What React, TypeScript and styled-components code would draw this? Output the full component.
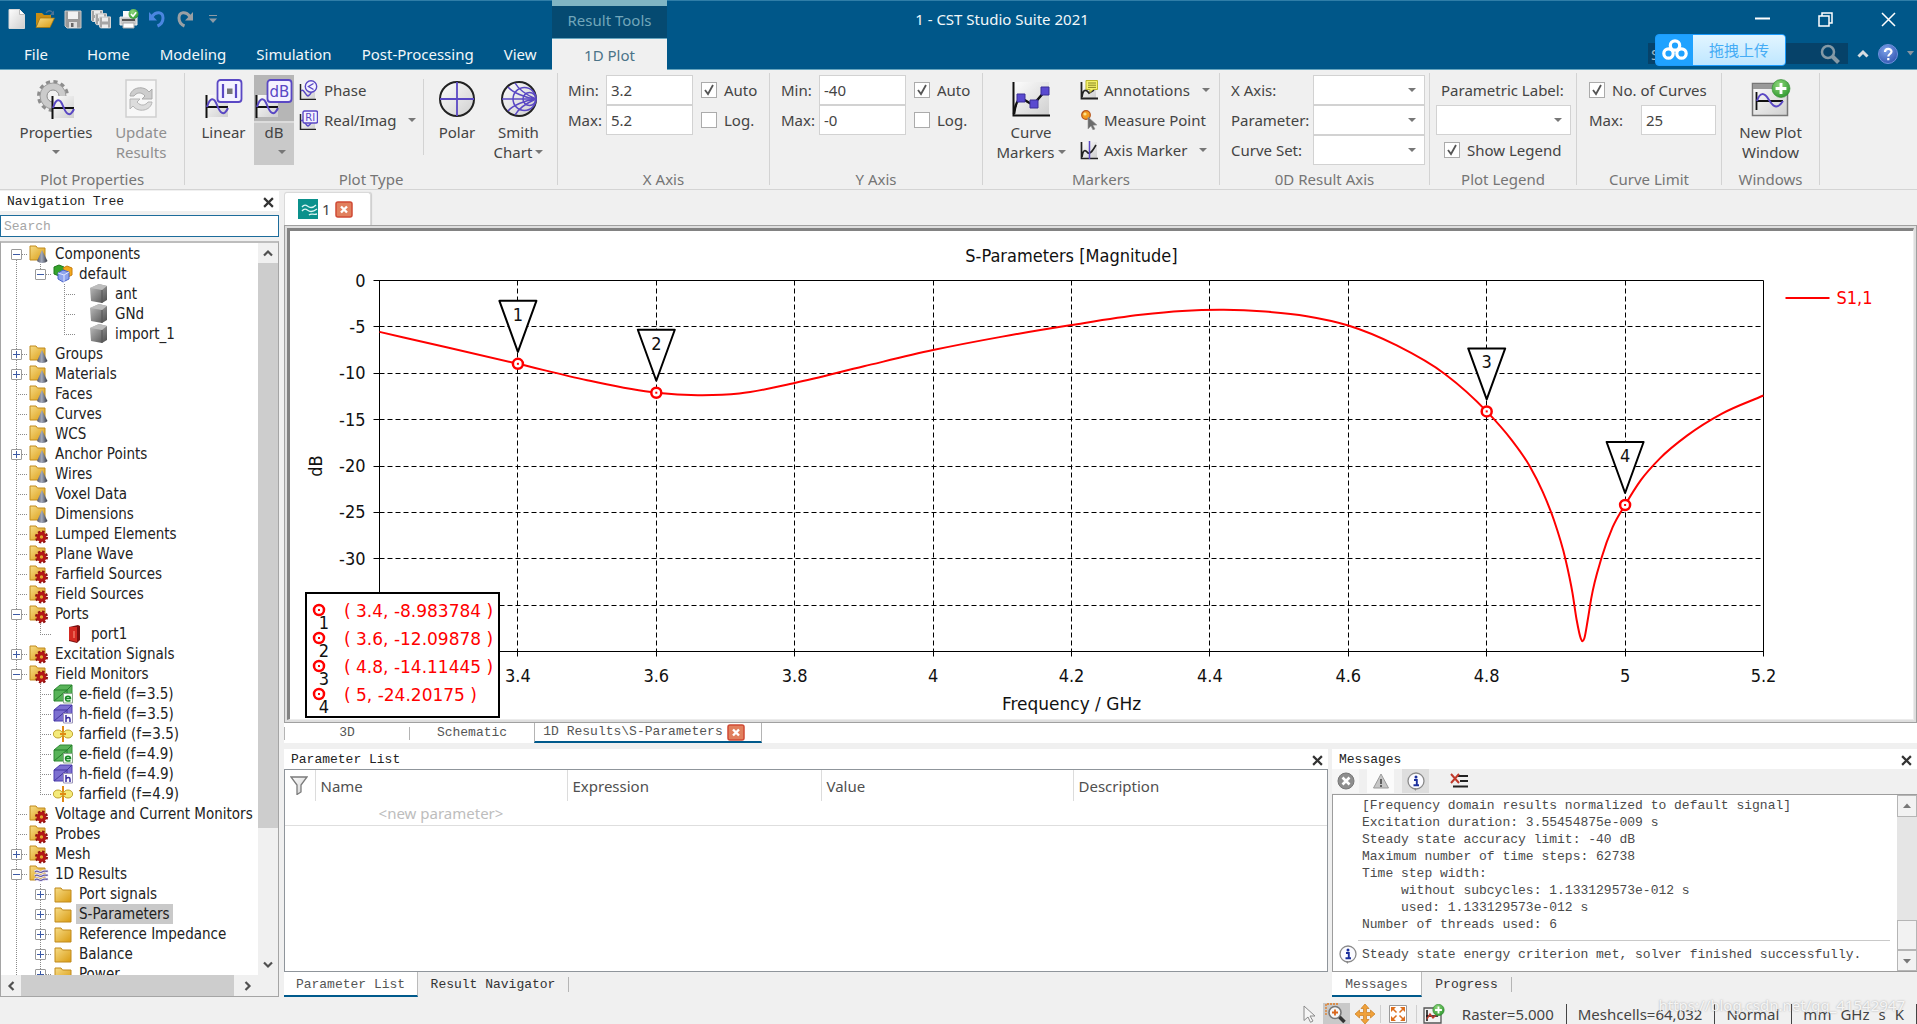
import React, { ReactNode, useLayoutEffect, useRef, useState } from "react";
import styled, { createGlobalStyle, css } from "styled-components";

/* ---------- theme values ---------- */

const uiFont = `"Noto Sans", "Noto Sans CJK SC", sans-serif`;
const monoFont = `"Liberation Mono", monospace`;
const tahoma = `"DejaVu Sans Condensed", "DejaVu Sans", sans-serif`;
const verdana = `"DejaVu Sans", sans-serif`;

const Global = createGlobalStyle`
  *, *::before, *::after { box-sizing: border-box; }
  body { margin: 0; background: #f0f0f0; font: 15px/20px ${uiFont}; color: #444; }
  button, input, select { font: inherit; color: inherit; margin: 0; padding: 0; border-radius: 0; }
  button { background: none; border: 0; text-align: inherit; }
  svg { display: block; flex: none; }
`;

const Page = styled.div`
  display: flex;
  flex-direction: column;
  height: 100vh;
  min-height: 720px;
  overflow: hidden;
`;

/* ---------- header ---------- */

const Header = styled.header`
  display: grid;
  grid-template-columns: 552px 115px 1fr 580px;
  grid-template-rows: 38px 31px;
  flex: none;
  background: #005789;
  color: #f2f7fa;
  border-bottom: 1px solid #66a5be;
  box-shadow: inset 0 1px 0 #2f7ea8;
`;

const QuickBar = styled.div`
  display: flex;
  align-items: center;
  gap: 8px;
  padding-left: 7px;
`;

const QuickButton = styled.button`
  display: grid;
  place-items: center;
  width: 20px;
  height: 22px;
`;

const ContextTitle = styled.div`
  display: flex;
  align-items: center;
  justify-content: center;
  padding-bottom: 5px;
  border-top: 6px solid #80b5c4;
  background: #054a71;
  color: #72a6ba;
`;

const WindowTitle = styled.div`
  display: flex;
  align-items: center;
  justify-content: center;
`;

const WindowButtons = styled.div`
  display: flex;
  justify-content: flex-end;
  align-items: center;
  gap: 30px;
  padding-right: 12px;
`;

const WindowButton = styled.button`
  display: grid;
  place-items: center;
  width: 33px;
  height: 30px;
`;

const Menu = styled.nav`
  display: flex;
  align-items: center;
`;

const MenuItem = styled.button<{ $wide?: boolean }>`
  padding: 0 ${(p) => (p.$wide ? 24 : 15)}px;
  height: 30px;
`;

const ActiveTab = styled.button`
  display: flex;
  justify-content: center;
  align-items: center;
  background: #f0f0f0;
  color: #4b7388;
  border-top: 1px solid #66a5be;
  margin-bottom: -1px;
`;

const HeaderTools = styled.div`
  grid-column: 4;
  display: flex;
  align-items: center;
  justify-content: flex-end;
  padding-right: 3px;
  gap: 8px;
`;

const SearchBox = styled.label`
  position: relative;
  display: flex;
  align-items: center;
  width: 200px;
  height: 21px;
  padding: 0 8px 0 3px;
  background: #064269;
  margin-right: 1px;
`;

const SearchInput = styled.input`
  flex: 1;
  min-width: 0;
  border: 0;
  background: none;
  &::placeholder { color: #9fb9c8; opacity: 1; }
`;

const UploadBadge = styled.button`
  position: absolute;
  left: 7px;
  top: -9px;
  display: flex;
  width: 131px;
  height: 32px;
  border: 1px solid #1b9bfc;
  border-radius: 4px;
  overflow: hidden;
  background: #1fa2ff;
`;

const UploadMark = styled.span`
  display: grid;
  place-items: center;
  width: 37px;
`;

const UploadText = styled.span`
  flex: 1;
  display: grid;
  place-items: center;
  background: linear-gradient(#e2f5ff, #bfe7ff);
  color: #45acf5;
`;

/* ---------- ribbon ---------- */

const Ribbon = styled.section`
  display: flex;
  flex: none;
  height: 120px;
  border-bottom: 1px solid #d4d4d4;
`;

const GroupBox = styled.div<{ $w: number }>`
  display: flex;
  flex-direction: column;
  width: ${(p) => p.$w}px;
  flex: none;
`;

const GroupBody = styled.div<{ $pad?: number; $end?: number }>`
  display: flex;
  flex: 1;
  padding: 5px ${(p) => p.$end ?? 0}px 0 ${(p) => p.$pad ?? 0}px;
`;

const GroupName = styled.div`
  height: 20px;
  text-align: center;
  color: #757575;
`;

const Rule = styled.div<{ $inner?: boolean }>`
  width: 1px;
  flex: none;
  background: #d3d3d3;
  margin: ${(p) => (p.$inner ? "4px 0 14px" : "3px 0 4px")};
`;

const BigButton = styled.button<{ $w: number; $on?: boolean }>`
  display: flex;
  flex-direction: column;
  align-items: center;
  flex: none;
  width: ${(p) => p.$w}px;
  height: 90px;
  text-align: center;
  ${(p) => p.$on && css`background: linear-gradient(#b6b6b6 46px, #dcdcdc 46px, #dcdcdc 48px, #c9c9c9 48px);`}
  &:disabled { color: #8f8f8f; }
`;

const BigIcon = styled.span`
  display: grid;
  place-items: center;
  height: 47px;
`;

const BigLine = styled.span<{ $end?: boolean }>`
  display: flex;
  align-items: center;
  justify-content: ${(p) => (p.$end ? "flex-end" : "center")};
  align-self: stretch;
  gap: 3px;
  height: 20px;
  padding-right: ${(p) => (p.$end ? 8 : 0)}px;
`;

const Caret = styled.i`
  flex: none;
  border: 4px solid transparent;
  border-top-color: #777;
  border-bottom: 0;
  width: 0;
  height: 0;
`;

const Stack = styled.div<{ $pad?: number }>`
  display: flex;
  flex-direction: column;
  padding-left: ${(p) => p.$pad ?? 0}px;
`;

const SmallButton = styled.button`
  display: flex;
  align-items: center;
  gap: 6px;
  height: 30px;
  white-space: nowrap;
  ${Caret} { margin-left: 6px; }
`;

const FieldGrid = styled.div<{ $cols: string }>`
  display: grid;
  grid-template-columns: ${(p) => p.$cols};
  grid-auto-rows: 30px;
  align-items: center;
`;

const FieldRow = styled.div<{ $pad?: number }>`
  display: flex;
  align-items: center;
  height: 30px;
  padding-left: ${(p) => p.$pad ?? 0}px;
`;

const FieldLabel = styled.label<{ $w?: number }>`
  white-space: nowrap;
  width: ${(p) => (p.$w ? `${p.$w}px` : "auto")};
`;

const TextInput = styled.input<{ $w: number }>`
  width: ${(p) => p.$w}px;
  height: 30px;
  padding: 0 4px;
  border: 1px solid #d2d2d2;
  background: #fff;
`;

const SelectBox = styled.span<{ $w: number }>`
  display: grid;
  align-items: center;
  width: ${(p) => p.$w}px;
  height: 30px;
  ${Caret} { grid-area: 1 / 1; justify-self: end; margin-right: 9px; pointer-events: none; }
`;

const Select = styled.select`
  grid-area: 1 / 1;
  appearance: none;
  width: 100%;
  height: 30px;
  border: 1px solid #d2d2d2;
  background: #fff;
`;

const CheckLabel = styled.label<{ $pad?: number }>`
  display: flex;
  align-items: center;
  gap: 7px;
  padding-left: ${(p) => p.$pad ?? 0}px;
  white-space: nowrap;
`;

const TickBox = styled.span`
  display: grid;
  place-items: center;
  width: 16px;
  height: 16px;
  > * { grid-area: 1 / 1; }
  svg { pointer-events: none; }
`;

const TickInput = styled.input`
  appearance: none;
  width: 16px;
  height: 16px;
  border: 1px solid #ababab;
  background: #fff;
`;

/* ---------- workspace ---------- */

const Workspace = styled.main`
  display: flex;
  flex: 1;
  min-height: 0;
  gap: 5px;
`;

const Sidebar = styled.aside`
  display: flex;
  flex-direction: column;
  width: 279px;
  flex: none;
  padding-top: 1px;
`;

const PanelTitle = styled.div`
  display: flex;
  align-items: center;
  justify-content: space-between;
  flex: none;
  height: 20px;
  padding: 2px 5px 0 7px;
  background: #fff;
  font: 13px/18px ${monoFont};
  color: #222;
`;

const IconButton = styled.button`
  display: grid;
  place-items: center;
  flex: none;
`;

const TreeSearch = styled.input`
  height: 22px;
  margin: 4px 0;
  padding: 0 3px;
  border: 1px solid #1d6c9b;
  background: #fff;
  font: 13px/20px ${monoFont};
  &::placeholder { color: #a6a6a6; opacity: 1; }
`;

const TreeBox = styled.div`
  display: grid;
  grid-template-columns: 1fr 20px;
  grid-template-rows: 1fr 21px;
  flex: 1;
  min-height: 0;
  border: 1px solid #a5a5a5;
  border-top-width: 2px;
  border-top-color: #bdbdbd;
  background: #f0f0f0;
`;

const TreeList = styled.ul`
  margin: 0;
  padding: 1px 0 0 3px;
  list-style: none;
  overflow: hidden;
  background: #fff;
  font: 15px/20px ${tahoma};
  color: #222;
`;

const TreeRow = styled.li`
  display: flex;
  height: 20px;
  white-space: nowrap;
`;

const Guide = styled.span`
  display: grid;
  place-items: center;
  width: 24px;
  flex: none;
  > * { grid-area: 1 / 1; }
`;

const Expander = styled.button`
  display: grid;
  place-items: center;
  width: 11px;
  height: 11px;
  border: 1px solid #9a9a9a;
  border-radius: 1px;
  background: #fff;
`;

const TreeIcon = styled.span<{ $far?: boolean }>`
  display: grid;
  place-items: center;
  flex: none;
  width: 20px;
  height: 20px;
  margin: 0 3px 0 ${(p) => (p.$far ? 13 : 1)}px;
`;

const TreeLabel = styled.span<{ $on?: boolean }>`
  padding: 0 3px;
  background: ${(p) => (p.$on ? "#c9c9c9" : "none")};
`;

const ScrollTrack = styled.div<{ $row?: boolean }>`
  display: flex;
  flex-direction: ${(p) => (p.$row ? "row" : "column")};
  align-items: stretch;
  min-height: 0;
`;

const ScrollEnd = styled.button`
  display: grid;
  place-items: center;
  flex: 0 0 20px;
`;

const ScrollThumb = styled.div<{ $grow: number }>`
  flex: ${(p) => p.$grow} 0 0;
  background: #cdcdcd;
`;

const ScrollRest = styled.div<{ $grow: number }>`
  flex: ${(p) => p.$grow} 0 0;
`;

const Content = styled.div`
  display: flex;
  flex-direction: column;
  flex: 1;
  min-width: 0;
`;

const DocTabs = styled.div`
  display: flex;
  align-items: flex-end;
  flex: none;
  height: 35px;
`;

const DocTab = styled.div`
  display: flex;
  align-items: center;
  gap: 4px;
  width: 87px;
  height: 33px;
  padding-left: 13px;
  background: #fff;
  border: 1px solid #dadada;
  border-bottom: 0;
  border-radius: 3px 3px 0 0;
  box-shadow: 1px 0 1px #ccc;
`;

const PlotFrame = styled.div`
  display: flex;
  flex: 1;
  min-height: 0;
  border: 1px solid #a0a0a0;
  padding: 2px;
  background: #dedede;
`;

const PlotArea = styled.div`
  flex: 1;
  min-width: 0;
  overflow: hidden;
  border-style: solid;
  border-width: 3px 1px 1px 3px;
  border-color: #828282 #ececec #ececec #828282;
  background: #fff;
`;

const ViewTabs = styled.div`
  display: flex;
  align-items: center;
  flex: none;
  height: 20px;
  margin-bottom: 6px;
  background: #fff;
  font: 13px/18px ${monoFont};
`;

const ViewTab = styled.button<{ $w: number; $on?: boolean }>`
  display: flex;
  align-items: center;
  justify-content: center;
  gap: 4px;
  width: ${(p) => p.$w}px;
  height: ${(p) => (p.$on ? 20 : 13)}px;
  color: #555;
  border-style: solid;
  border-color: #b4b4b4;
  border-width: ${(p) => (p.$on ? "0 1px 2px" : "0 0 0 1px")};
  ${(p) => p.$on && css`border-bottom-color: #005a8c; padding-right: 8px;`}
`;

const Lower = styled.div`
  display: flex;
  flex: none;
  height: 248px;
  gap: 4px;
`;

const Panel = styled.section<{ $grow: number }>`
  display: flex;
  flex-direction: column;
  flex: ${(p) => p.$grow} 1 0;
  min-width: 0;
`;

const PanelBox = styled.div`
  flex: 1;
  min-height: 0;
  border: 1px solid #8f959b;
  background: #fff;
`;

const ParamTable = styled.table`
  width: 100%;
  table-layout: fixed;
  border-collapse: collapse;
  th { height: 31px; padding: 0 5px; font-weight: 400; text-align: left; border-right: 1px solid #dcdcdc; color: #505050; }
  th:last-child { border-right: 0; }
  td { height: 24px; padding: 0; text-align: center; color: #bdbdbd; }
  tbody tr { border-bottom: 1px solid #dedede; }
`;

const FootTabs = styled.div`
  display: flex;
  flex: none;
  height: 25px;
  font: 13px/20px ${monoFont};
`;

const FootTab = styled.button<{ $w: number; $on?: boolean }>`
  width: ${(p) => p.$w}px;
  text-align: center;
  ${(p) =>
    p.$on
      ? css`background: #fff; border-bottom: 2px solid #005a8c; border-right: 1px solid #bbb; padding-top: 2px; color: #555;`
      : css`height: 15px; margin-top: 5px; line-height: 15px; border-right: 1px solid #b5b5b5; color: #333;`}
`;

const MsgTools = styled.div`
  display: flex;
  flex: none;
  height: 25px;
`;

const MsgTool = styled.button<{ $bg: string; $gap?: number }>`
  display: grid;
  place-items: center;
  width: 27px;
  height: 24px;
  margin-left: ${(p) => p.$gap ?? 4}px;
  background: ${(p) => p.$bg};
`;

const MsgBox = styled.div`
  display: flex;
  flex: 1;
  min-height: 0;
  border: 1px solid #9d9d9d;
  border-right: 0;
  background: #fff;
`;

const MsgList = styled.div`
  flex: 1;
  min-width: 0;
  overflow: hidden;
  font: 13px/17px ${monoFont};
  color: #4a4a4a;
`;

const MsgText = styled.pre`
  margin: 0 7px 0 25px;
  padding: 2px 0 0 4px;
  font: inherit;
  height: 146px;
  border-bottom: 1px solid #c9c9c9;
`;

const MsgLast = styled.div`
  display: flex;
  align-items: center;
  gap: 5px;
  height: 26px;
  padding-left: 6px;
  white-space: nowrap;
`;

const MsgScroll = styled.div`
  display: flex;
  flex-direction: column;
  width: 20px;
  background: #e5e5e5;
`;

const MsgScrollKey = styled.button<{ $h: number }>`
  display: grid;
  place-items: center;
  height: ${(p) => p.$h}px;
  border: 1px solid #b5b5b5;
  background: #f2f2f2;
`;

const Spacer = styled.div`
  flex: 1;
`;

/* ---------- status bar ---------- */

const Status = styled.footer`
  position: relative;
  display: flex;
  align-items: center;
  justify-content: flex-end;
  flex: none;
  height: 27px;
  padding-top: 6px;
`;

const StatusTool = styled.button<{ $on?: boolean; $w: number }>`
  display: grid;
  place-items: center;
  width: ${(p) => p.$w}px;
  height: 22px;
  background: ${(p) => (p.$on ? "#c9c9c9" : "none")};
`;

const StatusRule = styled.i`
  width: 1px;
  height: 18px;
  background: #cfcfcf;
`;

const StatusCell = styled.span`
  display: flex;
  gap: 9px;
  padding: 0 12px 0 11px;
  line-height: 20px;
  border-right: 1px solid #444;
`;

const Watermark = styled.span`
  position: absolute;
  right: 12px;
  top: -2px;
  color: rgba(255, 255, 255, 0.85);
  text-shadow: 0 0 2px rgba(110, 110, 110, 0.6);
  pointer-events: none;
`;

/* ---------- icons ---------- */

const Defs = styled.svg`
  position: absolute;
`;

const Gradients = () => (
  <Defs width="0" height="0" aria-hidden="true">
    <defs>
      <linearGradient id="paper" x1="0" y1="0" x2="1" y2="1">
        <stop offset="0" stopColor="#fdfdfd" />
        <stop offset="1" stopColor="#cfcfcf" />
      </linearGradient>
      <linearGradient id="gold" x1="0" y1="0" x2="1" y2="1">
        <stop offset="0" stopColor="#f7dc86" />
        <stop offset="1" stopColor="#d99b12" />
      </linearGradient>
      <linearGradient id="steel" x1="0" y1="0" x2="1" y2="0">
        <stop offset="0" stopColor="#55596a" />
        <stop offset=".45" stopColor="#a3aabd" />
        <stop offset="1" stopColor="#33363f" />
      </linearGradient>
      <linearGradient id="cube" x1="0" y1="0" x2="1" y2="1">
        <stop offset="0" stopColor="#c2c2c2" />
        <stop offset="1" stopColor="#4c4c4c" />
      </linearGradient>
      <radialGradient id="green" cx=".4" cy=".3" r=".8">
        <stop offset="0" stopColor="#8ed67a" />
        <stop offset="1" stopColor="#27932a" />
      </radialGradient>
      <radialGradient id="blue" cx=".4" cy=".3" r=".8">
        <stop offset="0" stopColor="#7fa3ea" />
        <stop offset="1" stopColor="#2c50ad" />
      </radialGradient>
    </defs>
  </Defs>
);

const Icon = ({ w, h, vb, children }: { w: number; h: number; vb?: string; children: ReactNode }) => (
  <svg width={w} height={h} viewBox={vb ?? `0 0 ${w} ${h}`} fill="none" aria-hidden="true">
    {children}
  </svg>
);

const violet = "#5a48c4";

const NewFile = () => (
  <Icon w={18} h={20}>
    <path d="M1 .5h10.500l5 5V19.500H1z" fill="url(#paper)" stroke="#d9d9d9" />
    <path d="M11.500.5v5h5" fill="#fff" stroke="#bbb" />
  </Icon>
);
const OpenFile = () => (
  <Icon w={20} h={20}>
    <path d="M1 4h6l2 2h7v4H5L1 17z" fill="#c98d13" />
    <path d="M5 9h14.500L15 18.500H1z" fill="url(#gold)" stroke="#a87407" strokeWidth=".7" />
    <path d="M11 4c2-3 5-3 7 0" stroke="#4b7396" strokeWidth="1.300" />
    <path d="M19 1.500V6h-4z" fill="#4b7396" />
  </Icon>
);
const SaveFile = () => (
  <Icon w={18} h={19}>
    <path d="M1 1h16v17H3l-2-2z" fill="#9a9a9a" stroke="#c9c9c9" />
    <path d="M4 1.500h10v7.500H4z" fill="#f2f2f2" />
    <path d="M5 12h8v6H5z" fill="#dedede" />
    <path d="M7 13h2.500v4H7z" fill="#666" />
  </Icon>
);
const SaveAll = () => (
  <Icon w={20} h={19}>
    {[0, 4, 8].map((d) => (
      <g key={d}>
        <path d={`M${d + 0.5} ${d * 0.8 + 0.5}h11v11h-10l-1-1z`} fill="#a5a5a5" stroke="#d5d5d5" />
        <path d={`M${d + 3} ${d * 0.8 + 1}h6v4h-6zM${d + 3} ${d * 0.8 + 8}h6v3.500h-6z`} fill="#ececec" />
      </g>
    ))}
  </Icon>
);
const PrintIcon = () => (
  <Icon w={20} h={20}>
    <path d="M4 2h10v6H4z" fill="#fafafa" />
    <path d="M1 8h17v8H1z" fill="#c9c9c9" stroke="#efefef" />
    <path d="M3 10h13v2H3z" fill="#555" />
    <path d="M4 14h11v5H4z" fill="#fff" stroke="#aaa" />
    <circle cx="14.500" cy="5" r="5" fill="url(#green)" />
    <path d="M12 5l2 2.200 3.200-4" stroke="#fff" strokeWidth="1.600" />
  </Icon>
);
const Undo = ({ color, flip }: { color: string; flip?: boolean }) => (
  <Icon w={18} h={18}>
    <g transform={flip ? "translate(18 0) scale(-1 1)" : undefined}>
      <path d="M4 6.500C8 1 15 1.500 15 8c0 4-2 6.500-5.500 8" stroke={color} strokeWidth="3" />
      <path d="M1 2v8.500h8z" fill={color} />
    </g>
  </Icon>
);
const QuickMore = () => (
  <Icon w={8} h={10}>
    <path d="M0 1.500h8" stroke="#8d9ba6" />
    <path d="M0 4.500h8L4 9z" fill="#8d9ba6" />
  </Icon>
);

const WaveChart = ({ x = 0, y = 0 }: { x?: number; y?: number }) => (
  <g transform={`translate(${x} ${y})`}>
    <path d="M1 0h22v22H1z" fill="url(#paper)" />
    <path d="M1.500 0v23" stroke="#111" strokeWidth="2" />
    <path d="M1 12h22" stroke="#111" strokeWidth="2" />
    <path d="M2 12C5 2 9 2 12 10s7 12 11 3" stroke={violet} strokeWidth="2" />
  </g>
);

const PropertiesIcon = () => (
  <Icon w={40} h={40}>
    <circle cx="17" cy="17" r="14" stroke="#8d8d8d" strokeWidth="4" strokeDasharray="4 3.330" />
    <circle cx="17" cy="17" r="9.500" stroke="#cbcbcb" strokeWidth="7" />
    <circle cx="17" cy="17" r="13" stroke="#9c9c9c" />
    <circle cx="17" cy="17" r="6" stroke="#8d8d8d" />
    <WaveChart x={15} y={17} />
  </Icon>
);
const UpdateIcon = () => (
  <Icon w={34} h={40}>
    <path d="M2 1h30v37H2z" fill="#f7f7f7" stroke="#cfcfcf" strokeWidth="1.500" />
    <path d="M6 17c1-9 14-11 19-4l3-3v10H18l3-3c-4-5-9-3-11 0z" fill="#cdcdcd" stroke="#ababab" />
    <path d="M28 23c-1 9-14 11-19 4l-3 3V20h10l-3 3c4 5 9 3 11 0z" fill="#dcdcdc" stroke="#b5b5b5" />
  </Icon>
);
const Badge = ({ children }: { children: ReactNode }) => (
  <g>
    <rect x="12.500" y="1" width="24" height="22" rx="3" fill="#f4f2ff" stroke={violet} strokeWidth="1.800" />
    {children}
  </g>
);
const LinearIcon = () => (
  <Icon w={38} h={40}>
    <WaveChart x={0} y={16} />
    <Badge>
      <path d="M18 5v14M31 5v14" stroke={violet} strokeWidth="2.200" />
      <path d="M22 9.500h5.500v5.500H22z" fill="#777" />
    </Badge>
  </Icon>
);
const BadgeText = styled.text`
  font-family: ${verdana};
  fill: ${violet};
`;
const DbIcon = () => (
  <Icon w={38} h={40}>
    <WaveChart x={0} y={16} />
    <Badge>
      <BadgeText x="24.500" y="17.500" fontSize="15" textAnchor="middle">dB</BadgeText>
    </Badge>
  </Icon>
);
const MiniChart = () => (
  <>
    <path d="M1 4h15v15H1z" fill="url(#paper)" />
    <path d="M1.500 4v15.500H17" stroke="#222" strokeWidth="1.500" />
    <path d="M2 11c3-3 4 4 7 5 3-1 4-6 6-8" stroke={violet} strokeWidth="1.500" />
  </>
);
const PhaseIcon = () => (
  <Icon w={19} h={20}>
    <MiniChart />
    <circle cx="12" cy="6.500" r="5.700" fill="#f4f2ff" stroke={violet} strokeWidth="1.400" />
    <path d="M14.500 3.500L9.500 6.500l5 3" stroke={violet} strokeWidth="1.400" />
  </Icon>
);
const RealIcon = () => (
  <Icon w={19} h={20}>
    <MiniChart />
    <rect x="4" y="1" width="14.500" height="12" rx="1.500" fill="#f4f2ff" stroke={violet} strokeWidth="1.400" />
    <BadgeText x="11.300" y="10.500" fontSize="10" textAnchor="middle">RI</BadgeText>
  </Icon>
);
const PolarIcon = () => (
  <Icon w={38} h={38}>
    <circle cx="19" cy="19" r="17" fill="url(#paper)" stroke="#222" strokeWidth="2" />
    <path d="M19 2v34M2 19h34" stroke={violet} strokeWidth="1.800" />
  </Icon>
);
const SmithIcon = () => (
  <Icon w={38} h={38}>
    <circle cx="19" cy="19" r="17" fill="url(#paper)" stroke="#222" strokeWidth="2" />
    <g stroke={violet} strokeWidth="1.500">
      <path d="M2 19h34" />
      <circle cx="24.500" cy="19" r="11.500" />
      <circle cx="29.500" cy="19" r="6.500" />
      <path d="M36 19C25 18 12 12 8 7M36 19C25 20 12 26 8 31M36 19C29 16 19 10 15 3M36 19c-7 3-17 9-21 16" />
    </g>
  </Icon>
);
const CurveIcon = () => (
  <Icon w={38} h={38}>
    <path d="M1 2h36v33H1z" fill="url(#paper)" />
    <path d="M1.500 2v33.500H38" stroke="#111" strokeWidth="2" />
    <path d="M2 34c1-8 3-14 7-16l12 7L33 11" stroke="#111" strokeWidth="2.500" />
    <path d="M5 14h8v8H5zM18 20h8v8h-8zM29 7h8v8h-8z" fill="#5a4ad0" stroke="#3b2f98" />
  </Icon>
);
const NoteIcon = () => (
  <Icon w={18} h={20}>
    <path d="M1 2h15v17H1z" fill="url(#paper)" />
    <path d="M1.500 2v16.500H18M2 17c1-8 4-8 7-4l5-3" stroke="#222" strokeWidth="1.800" />
    <path d="M6 .5h11.500v9H13l-3 3v-3H6z" fill="#f5f06a" stroke="#b9b52a" />
    <path d="M8 3h8M8 5.200h8M8 7.400h8" stroke="#7d7a1d" strokeWidth=".9" />
  </Icon>
);
const MeasureIcon = () => (
  <Icon w={18} h={20}>
    <circle cx="6" cy="5" r="4.300" fill="#f39a1d" stroke="#b5541b" strokeWidth="1.200" />
    <circle cx="5" cy="4" r="1.600" fill="#fde08a" />
    <path d="M8 7l9 8-4 .3 2 3.700-2 1-2-4-3 3z" fill="#6b6b6b" stroke="#999" strokeWidth=".6" />
  </Icon>
);
const AxisIcon = () => (
  <Icon w={18} h={20}>
    <path d="M1 2h16v16H1z" fill="url(#paper)" />
    <path d="M1.500 2v16.500H18M2 17c1-7 3-8 6-4 3 1 5-3 8-8" stroke="#222" strokeWidth="1.700" />
    <path d="M9.500 1v18" stroke={violet} strokeWidth="1.500" />
  </Icon>
);
const Plus = ({ x, y, r }: { x: number; y: number; r: number }) => (
  <g transform={`translate(${x} ${y})`}>
    <circle r={r} fill="url(#green)" stroke="#2f8a2d" strokeWidth=".6" />
    <path d={`M${-r * 0.6} 0H${r * 0.6}M0 ${-r * 0.6}V${r * 0.6}`} stroke="#fff" strokeWidth={r * 0.32} />
  </g>
);
const NewPlotIcon = () => (
  <Icon w={40} h={40}>
    <path d="M1.500 4.500h35v32h-35z" fill="url(#paper)" stroke="#777" strokeWidth="1.500" />
    <path d="M2 5h34v5H2z" fill="#999" />
    <path d="M5.500 13v18M5 22h27" stroke="#111" strokeWidth="1.800" />
    <path d="M6 22C9 13 13 13 18 21s9 9 14 1" stroke={violet} strokeWidth="2" />
    <Plus x={30} y={9.5} r={9} />
  </Icon>
);

const CloseX = ({ s = 9 }: { s?: number }) => (
  <Icon w={s} h={s} vb="0 0 10 10">
    <path d="M1 1l8 8M9 1l-8 8" stroke="#333" strokeWidth="2" />
  </Icon>
);
const RedClose = () => (
  <Icon w={18} h={17}>
    <rect x="1" y="1" width="16" height="15" rx="2" fill="#e1805e" stroke="#cf4a35" strokeWidth="1.500" />
    <path d="M6 5.500l6 6M12 5.500l-6 6" stroke="#fff" strokeWidth="2.400" />
  </Icon>
);
const WavesTile = () => (
  <Icon w={20} h={20}>
    <path d="M0 0h20v20H0z" fill="#0b918c" />
    <path d="M4 8c3-4 5-1 7 0s4 1 7-2M4 12c3-4 5-1 7 0s4 1 8-2M11 16c2-2 4 0 8-1" stroke="#dff5f3" strokeWidth="1.300" />
  </Icon>
);
const Chevron = ({ d }: { d: "up" | "down" | "left" | "right" }) => {
  const turn = { up: 0, right: 90, down: 180, left: 270 }[d];
  return (
    <Icon w={12} h={12}>
      <path d="M2 8.500L6 4.500l4 4" stroke="#505050" strokeWidth="2.200" transform={`rotate(${turn} 6 6)`} />
    </Icon>
  );
};
const Triangle = ({ down }: { down?: boolean }) => (
  <Icon w={8} h={6}>
    <path d={down ? "M0 1h8L4 5.500z" : "M0 5h8L4 .5z"} fill="#777" />
  </Icon>
);
const InfoIcon = () => (
  <Icon w={18} h={19}>
    <circle cx="9" cy="9" r="8" fill="#fbfbff" stroke="#8a8a8a" strokeWidth="1.300" />
    <path d="M6 16l3 3v-3z" fill="#8a8a8a" />
    <circle cx="9" cy="5" r="1.500" fill="#1b2f9c" />
    <path d="M7 8h2.800v5M6.500 13.300h5.500" stroke="#1b2f9c" strokeWidth="1.900" />
  </Icon>
);

const Folder = ({ plain }: { plain?: boolean }) => (
  <path
    d={plain ? "M2 4h6l1.500 2H18v12H2z" : "M1 2h6l1.500 2H16v12H1z"}
    fill="url(#gold)"
    stroke="#c08a1c"
  />
);
type TreeIconName = "cone" | "gear" | "parts" | "solid" | "port" | "efield" | "hfield" | "far" | "waves" | "folder";
const treeIcons: Record<TreeIconName, ReactNode> = {
  cone: (
    <>
      <Folder />
      <path d="M13 6l5.500 11c-2 2.500-8.500 2.500-10.500 0z" fill="url(#steel)" />
    </>
  ),
  gear: (
    <>
      <Folder />
      <circle cx="12.500" cy="13" r="5.200" stroke="#8e1010" strokeWidth="2.600" strokeDasharray="2.300 1.780" />
      <circle cx="12.500" cy="13" r="3.300" stroke="#b31717" strokeWidth="3.200" />
    </>
  ),
  parts: (
    <>
      <path d="M1 3l5-2 5 2v7l-5 2-5-2z" fill="#35a32c" stroke="#1f7a1b" />
      <path d="M10 4l4-2 5 2v7l-4 2z" fill="#f3a81c" stroke="#c97e0c" />
      <path d="M5 9l5-3 6 2v7l-6 3-5-3z" fill="#8fa4ee" stroke="#4b64c9" />
      <path d="M5 9l6 2 5-3M11 11v7" stroke="#dfe6ff" />
    </>
  ),
  solid: (
    <>
      <path d="M1 4l9-4 8 2v14l-5 3-11-2z" fill="url(#cube)" />
      <path d="M1 4l12 2 5-4-8-2z" fill="#bdbdbd" />
      <path d="M13 6v13" stroke="#555" />
    </>
  ),
  port: (
    <>
      <path d="M4 3l9-2 2 1v14l-3 3-8-2z" fill="#7d1010" />
      <path d="M4 3h8v15l-8-2z" fill="#d42a22" />
      <path d="M9 7v7" stroke="#ff9a80" />
    </>
  ),
  efield: (
    <>
      <path d="M1 6l6-5h12v10l-4 6H1z" fill="#58b358" stroke="#2e8a33" />
      <path d="M1 6h13l5-5M14 6v11M1 17L14 6" stroke="#257d2b" />
      <path d="M10.500 9.500h9v9.500h-9z" fill="#f2fff2" stroke="#8aa58a" />
      <path d="M12.500 14.500h5c0-3-5-3-5 0s3 3 5 2" stroke="#1a8a26" strokeWidth="1.500" />
    </>
  ),
  hfield: (
    <>
      <path d="M1 6l6-5h12v10l-4 6H1z" fill="#7c6fd0" stroke="#4a3cae" />
      <path d="M1 6h13l5-5M14 6v11M1 17L14 6" stroke="#43359f" />
      <path d="M10.500 9.500h9v9.500h-9z" fill="#f8f7ff" stroke="#9c96b8" />
      <path d="M13 11v7M13 15c1-2 4-2 4 0v3" stroke="#3b2da0" strokeWidth="1.500" />
    </>
  ),
  far: (
    <>
      <path d="M10 2v16" stroke="#e08a14" strokeWidth="2" />
      <ellipse cx="5" cy="10" rx="4.700" ry="4" fill="#f4ea7a" stroke="#bfa22b" />
      <ellipse cx="15" cy="10" rx="4.700" ry="4" fill="#f4ea7a" stroke="#bfa22b" />
      <path d="M7 10h6" stroke="#e08a14" strokeWidth="2" />
    </>
  ),
  waves: (
    <>
      <Folder />
      <path d="M6 8c3-3 4 2 7 0s3 0 6-1M6 12c3-3 4 2 7 0s3 0 6-1M6 16c3-3 4 2 7 0s3 0 6-1" stroke="#e9e6ff" strokeWidth="3" />
      <path d="M6 8c3-3 4 2 7 0s3 0 6-1M6 12c3-3 4 2 7 0s3 0 6-1M6 16c3-3 4 2 7 0s3 0 6-1" stroke="#6a5f9e" strokeWidth="1.300" />
    </>
  ),
  folder: <Folder plain />,
};

/* ---------- navigation tree ---------- */

/* Guide letters, one per level: F first, T branch, L last, I pass-through, "-" empty. */
type Node = { g: string; label: string; icon: TreeIconName; ex?: "+" | "-"; far?: boolean; on?: boolean };

const nodes: Node[] = [
  { g: "F", ex: "-", icon: "cone", label: "Components" },
  { g: "IL", ex: "-", icon: "parts", label: "default" },
  { g: "I-T", icon: "solid", label: "ant", far: true },
  { g: "I-T", icon: "solid", label: "GNd", far: true },
  { g: "I-L", icon: "solid", label: "import_1", far: true },
  { g: "T", ex: "+", icon: "cone", label: "Groups" },
  { g: "T", ex: "+", icon: "cone", label: "Materials" },
  { g: "T", icon: "cone", label: "Faces" },
  { g: "T", icon: "cone", label: "Curves" },
  { g: "T", icon: "cone", label: "WCS" },
  { g: "T", ex: "+", icon: "cone", label: "Anchor Points" },
  { g: "T", icon: "cone", label: "Wires" },
  { g: "T", icon: "cone", label: "Voxel Data" },
  { g: "T", icon: "cone", label: "Dimensions" },
  { g: "T", icon: "gear", label: "Lumped Elements" },
  { g: "T", icon: "gear", label: "Plane Wave" },
  { g: "T", icon: "gear", label: "Farfield Sources" },
  { g: "T", icon: "gear", label: "Field Sources" },
  { g: "T", ex: "-", icon: "gear", label: "Ports" },
  { g: "IL", icon: "port", label: "port1", far: true },
  { g: "T", ex: "+", icon: "gear", label: "Excitation Signals" },
  { g: "T", ex: "-", icon: "gear", label: "Field Monitors" },
  { g: "IT", icon: "efield", label: "e-field (f=3.5)" },
  { g: "IT", icon: "hfield", label: "h-field (f=3.5)" },
  { g: "IT", icon: "far", label: "farfield (f=3.5)" },
  { g: "IT", icon: "efield", label: "e-field (f=4.9)" },
  { g: "IT", icon: "hfield", label: "h-field (f=4.9)" },
  { g: "IL", icon: "far", label: "farfield (f=4.9)" },
  { g: "T", icon: "gear", label: "Voltage and Current Monitors" },
  { g: "T", icon: "gear", label: "Probes" },
  { g: "T", ex: "+", icon: "gear", label: "Mesh" },
  { g: "T", ex: "-", icon: "waves", label: "1D Results" },
  { g: "IT", ex: "+", icon: "folder", label: "Port signals" },
  { g: "IT", ex: "+", icon: "folder", label: "S-Parameters", on: true },
  { g: "IT", ex: "+", icon: "folder", label: "Reference Impedance" },
  { g: "IT", ex: "+", icon: "folder", label: "Balance" },
  { g: "IT", ex: "+", icon: "folder", label: "Power" },
];

const guidePath: Record<string, string> = {
  F: "M12.500 10v10M12 10.500h12",
  T: "M12.500 0v20M12 10.500h12",
  L: "M12.500 0v10M12 10.500h12",
  I: "M12.500 0v20",
  "-": "",
};

const Tree = () => (
  <TreeList>
    {nodes.map((n, i) => (
      <TreeRow key={i}>
        {n.g.split("").map((c, level) => (
          <Guide key={level}>
            <Icon w={24} h={20}>
              <path d={guidePath[c]} stroke="#8a8a8a" strokeDasharray="1 1" />
            </Icon>
            {n.ex && level === n.g.length - 1 && (
              <Expander aria-label={n.label}>
                <Icon w={7} h={7}>
                  <path d={n.ex === "+" ? "M0 3.500h7M3.500 0v7" : "M0 3.500h7"} stroke="#3c5aa5" />
                </Icon>
              </Expander>
            )}
          </Guide>
        ))}
        <TreeIcon $far={n.far}>
          <Icon w={20} h={20}>{treeIcons[n.icon]}</Icon>
        </TreeIcon>
        <TreeLabel $on={n.on}>{n.label}</TreeLabel>
      </TreeRow>
    ))}
  </TreeList>
);

/* ---------- plot ---------- */

const curve: [number, number][] = [
  [3.2, -5.54], [3.3, -7.25], [3.4, -8.98], [3.5, -10.75], [3.6, -12.1], [3.66, -12.36], [3.72, -12.18],
  [3.8, -11.05], [3.9, -9.25], [4.0, -7.5], [4.1, -6.05], [4.2, -4.8], [4.3, -3.7], [4.36, -3.28], [4.42, -3.15],
  [4.48, -3.35], [4.54, -3.85], [4.6, -4.85], [4.67, -7.0], [4.74, -10.1], [4.8, -14.11], [4.835, -17.1],
  [4.862, -20], [4.881, -22.8], [4.897, -25.8], [4.914, -30.1], [4.924, -33.7], [4.93, -36.6], [4.936, -38.6],
  [4.9385, -38.9], [4.941, -38.6], [4.946, -36.6], [4.951, -34.3], [4.966, -29.9], [4.982, -26.6], [5.0, -24.2],
  [5.023, -21.5], [5.05, -19.2], [5.09, -16.7], [5.14, -14.35], [5.2, -12.4],
];

const markers = [
  { x: 3.4, y: -8.983784, text: "( 3.4, -8.983784 )" },
  { x: 3.6, y: -12.09878, text: "( 3.6, -12.09878 )" },
  { x: 4.8, y: -14.11445, text: "( 4.8, -14.11445 )" },
  { x: 5, y: -24.20175, text: "( 5, -24.20175 )" },
];

const PlotText = styled.text<{ $wide?: boolean; $red?: boolean }>`
  font: ${(p) => (p.$wide ? `17px ${verdana}` : `18px ${tahoma}`)};
  fill: ${(p) => (p.$red ? "#f00" : "#111")};
`;

/* Cubic segments whose end slopes weigh the two neighbouring chords by their length. */
const smooth = (pts: [number, number][]) => {
  const chord = (i: number) => (pts[i + 1][1] - pts[i][1]) / (pts[i + 1][0] - pts[i][0]);
  const last = pts.length - 1;
  const slope = (i: number) => {
    if (i === 0) return chord(0);
    if (i === last) return chord(last - 1);
    const h0 = pts[i][0] - pts[i - 1][0];
    const h1 = pts[i + 1][0] - pts[i][0];
    return (chord(i - 1) * h1 + chord(i) * h0) / (h0 + h1);
  };
  let d = `M${pts[0][0]} ${pts[0][1]}`;
  for (let i = 0; i < last; i++) {
    const [x0, y0] = pts[i];
    const [x1, y1] = pts[i + 1];
    const k = (x1 - x0) / 3;
    d += `C${x0 + k} ${y0 + slope(i) * k} ${x1 - k} ${y1 - slope(i + 1) * k} ${x1} ${y1}`;
  }
  return d;
};

const MarkerDot = ({ x, y }: { x: number; y: number }) => (
  <g transform={`translate(${x} ${y})`}>
    <circle r="5" fill="#fff" stroke="#f00" strokeWidth="2.500" />
    <path d="M-1-1h2v2h-2z" fill="#f00" />
  </g>
);

const Plot = () => {
  const ref = useRef<HTMLDivElement>(null);
  const [size, setSize] = useState({ w: 1622, h: 488 });
  useLayoutEffect(() => {
    const el = ref.current!;
    const read = () => setSize({ w: el.clientWidth, h: el.clientHeight });
    read();
    const ro = new ResizeObserver(read);
    ro.observe(el);
    return () => ro.disconnect();
  }, []);
  const { w, h } = size;
  const L = 89.5;
  const T = 49.5;
  const R = Math.round(w - 150) + 0.5;
  const B = Math.round(h - 68) + 0.5;
  const px = (f: number) => L + ((f - 3.2) / 2) * (R - L);
  const py = (v: number) => T + (-v / 40) * (B - T);
  const xs = Array.from({ length: 11 }, (_, i) => Number((3.2 + i * 0.2).toFixed(1)));
  const ys = [0, -5, -10, -15, -20, -25, -30, -35, -40];
  const crisp = (n: number) => Math.floor(n) + 0.5;
  const boxY = h - 126;
  return (
    <PlotArea ref={ref}>
      <svg width={w} height={h} fill="none" role="img" aria-label="S-Parameters [Magnitude]">
        <PlotText x={(L + R) / 2} y={31} textAnchor="middle">S-Parameters [Magnitude]</PlotText>
        <g stroke="#000" strokeDasharray="5 3">
          {ys.slice(1, -1).map((v) => <path key={v} d={`M${L} ${crisp(py(v))}H${R}`} />)}
          {xs.slice(1, -1).map((f) => <path key={f} d={`M${crisp(px(f))} ${T}V${B}`} />)}
        </g>
        <g stroke="#000">
          <path d={`M${L} ${T}H${R}V${B}H${L}z`} />
          {ys.map((v) => <path key={v} d={`M${L - 6} ${crisp(py(v))}h8`} />)}
          {xs.map((f) => <path key={f} d={`M${crisp(px(f))} ${B - 2}v7`} />)}
        </g>
        {ys.slice(0, 7).map((v) => (
          <PlotText key={v} x={L - 14} y={py(v) + 6} textAnchor="end">{v}</PlotText>
        ))}
        {xs.slice(1).map((f) => (
          <PlotText key={f} x={px(f)} y={B + 30} textAnchor="middle">{f}</PlotText>
        ))}
        <PlotText $wide x={(L + R) / 2} y={B + 58} textAnchor="middle">Frequency / GHz</PlotText>
        <PlotText transform={`translate(32 ${(T + B) / 2}) rotate(-90)`} textAnchor="middle">dB</PlotText>
        <path d={smooth(curve.map(([f, v]) => [px(f), py(v)] as [number, number]))} stroke="#f00" strokeWidth="2" />
        {markers.map((m, i) => {
          const x = px(m.x);
          const y = py(m.y);
          return (
            <g key={m.x}>
              <path
                d={`M${x - 18.5} ${y - 63}h37L${x} ${y - 12}z`}
                fill="#fff"
                stroke="#000"
                strokeWidth="2"
                strokeLinejoin="round"
              />
              <PlotText x={x} y={y - 43} textAnchor="middle">{i + 1}</PlotText>
              <MarkerDot x={x} y={y} />
            </g>
          );
        })}
        <path d={`M${R + 22} 67h44`} stroke="#f00" strokeWidth="2" />
        <PlotText $red x={R + 73} y={73}>S1,1</PlotText>
        <rect x="16" y={boxY} width="193" height="124" fill="#fff" stroke="#000" strokeWidth="2" />
        {markers.map((m, i) => (
          <g key={m.x}>
            <MarkerDot x={29} y={boxY + 17 + i * 28} />
            <PlotText x={34} y={boxY + 36 + i * 28} textAnchor="middle">{i + 1}</PlotText>
            <PlotText $wide $red x={54} y={boxY + 24 + i * 28}>{m.text}</PlotText>
          </g>
        ))}
      </svg>
    </PlotArea>
  );
};

/* ---------- small form parts ---------- */

const Tick = ({ label, on, pad }: { label: string; on?: boolean; pad?: number }) => (
  <CheckLabel $pad={pad}>
    <TickBox>
      <TickInput type="checkbox" defaultChecked={on} />
      {on && (
        <Icon w={12} h={12}>
          <path d="M2 6l3 4 5-9" stroke="#555" strokeWidth="1.800" />
        </Icon>
      )}
    </TickBox>
    {label}
  </CheckLabel>
);

const DropDown = ({ id, w }: { id: string; w: number }) => (
  <SelectBox $w={w}>
    <Select id={id} defaultValue="">
      <option value="" />
    </Select>
    <Caret />
  </SelectBox>
);

type GroupProps = { w: number; name: string; pad?: number; end?: number; children: ReactNode };
const Group = ({ w, name, pad, end, children }: GroupProps) => (
  <>
    <GroupBox $w={w}>
      <GroupBody $pad={pad} $end={end}>{children}</GroupBody>
      <GroupName>{name}</GroupName>
    </GroupBox>
    <Rule />
  </>
);

const AxisFields = ({ id, min, max }: { id: string; min: string; max: string }) => (
  <FieldGrid $cols="38px 87px auto">
    <FieldLabel htmlFor={`${id}-min`}>Min:</FieldLabel>
    <TextInput id={`${id}-min`} $w={87} defaultValue={min} />
    <Tick label="Auto" on pad={8} />
    <FieldLabel htmlFor={`${id}-max`}>Max:</FieldLabel>
    <TextInput id={`${id}-max`} $w={87} defaultValue={max} />
    <Tick label="Log." pad={8} />
  </FieldGrid>
);

const messages = `[Frequency domain results normalized to default signal]
Excitation duration: 3.55454875e-009 s
Steady state accuracy limit: -40 dB
Maximum number of time steps: 62738
Time step width:
     without subcycles: 1.133129573e-012 s
     used: 1.133129573e-012 s
Number of threads used: 6`;

/* ---------- page ---------- */

export default function App() {
  return (
    <Page>
      <Global />
      <Gradients />
      <Header>
        <QuickBar>
          <QuickButton aria-label="New"><NewFile /></QuickButton>
          <QuickButton aria-label="Open"><OpenFile /></QuickButton>
          <QuickButton aria-label="Save"><SaveFile /></QuickButton>
          <QuickButton aria-label="Save all"><SaveAll /></QuickButton>
          <QuickButton aria-label="Print"><PrintIcon /></QuickButton>
          <QuickButton aria-label="Undo"><Undo color="#4a86e0" /></QuickButton>
          <QuickButton aria-label="Redo"><Undo color="#9aa0a4" flip /></QuickButton>
          <QuickButton aria-label="Customize"><QuickMore /></QuickButton>
        </QuickBar>
        <ContextTitle>Result Tools</ContextTitle>
        <WindowTitle>1 - CST Studio Suite 2021</WindowTitle>
        <WindowButtons>
          <WindowButton aria-label="Minimize">
            <Icon w={15} h={15}><path d="M0 6.500h15" stroke="#fff" strokeWidth="2" /></Icon>
          </WindowButton>
          <WindowButton aria-label="Restore">
            <Icon w={15} h={15}>
              <path d="M1 4h10v10H1z" stroke="#fff" strokeWidth="1.500" />
              <path d="M4 4V1h10v10h-3" stroke="#fff" strokeWidth="1.500" />
            </Icon>
          </WindowButton>
          <WindowButton aria-label="Close">
            <Icon w={15} h={15}><path d="M1 1l13 13M14 1L1 14" stroke="#fff" strokeWidth="1.500" /></Icon>
          </WindowButton>
        </WindowButtons>
        <Menu>
          <MenuItem $wide>File</MenuItem>
          {["Home", "Modeling", "Simulation", "Post-Processing", "View"].map((m) => (
            <MenuItem key={m}>{m}</MenuItem>
          ))}
        </Menu>
        <ActiveTab>1D Plot</ActiveTab>
        <HeaderTools>
          <SearchBox>
            <SearchInput type="text" placeholder="S" aria-label="Search" />
            <Icon w={20} h={20}>
              <circle cx="8" cy="8" r="6" stroke="#8499a6" strokeWidth="2.500" />
              <path d="M12 12l6.500 6.500" stroke="#8499a6" strokeWidth="4" />
            </Icon>
            <UploadBadge>
              <UploadMark>
                <Icon w={26} h={22}>
                  <g stroke="#fff" strokeWidth="3.200">
                    <circle cx="13" cy="6.500" r="4.700" />
                    <circle cx="6.500" cy="14.500" r="4.700" />
                    <circle cx="19.500" cy="14.500" r="4.700" />
                  </g>
                </Icon>
              </UploadMark>
              <UploadText>拖拽上传</UploadText>
            </UploadBadge>
          </SearchBox>
          <IconButton aria-label="Collapse ribbon">
            <Icon w={12} h={12}><path d="M1.500 8.500L6 4l4.500 4.500" stroke="#d7dde1" strokeWidth="3" /></Icon>
          </IconButton>
          <IconButton aria-label="Help">
            <Icon w={22} h={20}>
              <circle cx="11" cy="10" r="9.500" fill="url(#blue)" stroke="#6f92dd" />
              <path d="M8 8c0-4 6.500-4 6.500-.5 0 2.500-3.200 2.500-3.200 5M11.300 14v2.200" stroke="#fff" strokeWidth="2.200" />
            </Icon>
          </IconButton>
          <IconButton aria-label="Help menu">
            <Icon w={7} h={5}><path d="M0 0h7L3.500 4.500z" fill="#8794a0" /></Icon>
          </IconButton>
        </HeaderTools>
      </Header>

      <Ribbon>
        <Group w={184} name="Plot Properties" pad={8}>
          <BigButton $w={96}>
            <BigIcon><PropertiesIcon /></BigIcon>
            <BigLine>Properties</BigLine>
            <BigLine><Caret /></BigLine>
          </BigButton>
          <BigButton $w={74} disabled>
            <BigIcon><UpdateIcon /></BigIcon>
            <BigLine>Update</BigLine>
            <BigLine>Results</BigLine>
          </BigButton>
        </Group>

        <Group w={372} name="Plot Type" pad={8} end={10}>
          <BigButton $w={61}>
            <BigIcon><LinearIcon /></BigIcon>
            <BigLine>Linear</BigLine>
          </BigButton>
          <BigButton $w={40} $on>
            <BigIcon><DbIcon /></BigIcon>
            <BigLine>dB</BigLine>
            <BigLine $end><Caret /></BigLine>
          </BigButton>
          <Stack $pad={5}>
            <SmallButton><PhaseIcon />Phase</SmallButton>
            <SmallButton><RealIcon />Real/Imag <Caret /></SmallButton>
          </Stack>
          <Spacer />
          <Rule $inner />
          <BigButton $w={66}>
            <BigIcon><PolarIcon /></BigIcon>
            <BigLine>Polar</BigLine>
          </BigButton>
          <BigButton $w={57}>
            <BigIcon><SmithIcon /></BigIcon>
            <BigLine>Smith</BigLine>
            <BigLine>Chart<Caret /></BigLine>
          </BigButton>
        </Group>

        <Group w={211} name="X Axis" pad={10}>
          <AxisFields id="x" min="3.2" max="5.2" />
        </Group>

        <Group w={212} name="Y Axis" pad={11}>
          <AxisFields id="y" min="-40" max="-0" />
        </Group>

        <Group w={236} name="Markers" pad={6}>
          <BigButton $w={84}>
            <BigIcon><CurveIcon /></BigIcon>
            <BigLine>Curve</BigLine>
            <BigLine>Markers<Caret /></BigLine>
          </BigButton>
          <Stack $pad={7}>
            <SmallButton><NoteIcon />Annotations<Caret /></SmallButton>
            <SmallButton><MeasureIcon />Measure Point</SmallButton>
            <SmallButton><AxisIcon />Axis Marker<Caret /></SmallButton>
          </Stack>
        </Group>

        <Group w={209} name="0D Result Axis" pad={11}>
          <FieldGrid $cols="82px 112px">
            <FieldLabel htmlFor="od-x">X Axis:</FieldLabel>
            <DropDown id="od-x" w={112} />
            <FieldLabel htmlFor="od-p">Parameter:</FieldLabel>
            <DropDown id="od-p" w={112} />
            <FieldLabel htmlFor="od-c">Curve Set:</FieldLabel>
            <DropDown id="od-c" w={112} />
          </FieldGrid>
        </Group>

        <Group w={146} name="Plot Legend" pad={6}>
          <Stack>
            <FieldRow $pad={5}><FieldLabel htmlFor="plabel">Parametric Label:</FieldLabel></FieldRow>
            <DropDown id="plabel" w={135} />
            <FieldRow $pad={8}><Tick label="Show Legend" on /></FieldRow>
          </Stack>
        </Group>

        <Group w={144} name="Curve Limit" pad={12}>
          <Stack>
            <FieldRow><Tick label="No. of Curves" on /></FieldRow>
            <FieldRow>
              <FieldLabel htmlFor="climit" $w={52}>Max:</FieldLabel>
              <TextInput id="climit" $w={75} defaultValue="25" />
            </FieldRow>
          </Stack>
        </Group>

        <Group w={97} name="Windows">
          <BigButton $w={97}>
            <BigIcon><NewPlotIcon /></BigIcon>
            <BigLine>New Plot</BigLine>
            <BigLine>Window</BigLine>
          </BigButton>
        </Group>
      </Ribbon>

      <Workspace>
        <Sidebar>
          <PanelTitle>
            Navigation Tree
            <IconButton aria-label="Close navigation tree"><CloseX s={11} /></IconButton>
          </PanelTitle>
          <TreeSearch type="text" placeholder="Search" aria-label="Search tree" />
          <TreeBox>
            <Tree />
            <ScrollTrack>
              <ScrollEnd aria-label="Scroll up"><Chevron d="up" /></ScrollEnd>
              <ScrollThumb $grow={564} />
              <ScrollRest $grow={127} />
              <ScrollEnd aria-label="Scroll down"><Chevron d="down" /></ScrollEnd>
            </ScrollTrack>
            <ScrollTrack $row>
              <ScrollEnd aria-label="Scroll left"><Chevron d="left" /></ScrollEnd>
              <ScrollThumb $grow={210} />
              <ScrollRest $grow={4} />
              <ScrollEnd aria-label="Scroll right"><Chevron d="right" /></ScrollEnd>
            </ScrollTrack>
          </TreeBox>
        </Sidebar>

        <Content>
          <DocTabs>
            <DocTab>
              <WavesTile />
              1
              <IconButton aria-label="Close tab"><RedClose /></IconButton>
            </DocTab>
          </DocTabs>
          <PlotFrame><Plot /></PlotFrame>
          <ViewTabs>
            <ViewTab $w={125}>3D</ViewTab>
            <ViewTab $w={125}>Schematic</ViewTab>
            <ViewTab $w={228} $on>1D Results\S-Parameters<RedClose /></ViewTab>
          </ViewTabs>

          <Lower>
            <Panel $grow={1044}>
              <PanelTitle>
                Parameter List
                <IconButton aria-label="Close parameter list"><CloseX s={11} /></IconButton>
              </PanelTitle>
              <PanelBox>
                <ParamTable>
                  <colgroup>
                    <col width="30" />
                    <col width="252" />
                    <col width="254" />
                    <col width="252" />
                    <col />
                  </colgroup>
                  <thead>
                    <tr>
                      <th aria-label="Filter">
                        <Icon w={18} h={19}>
                          <path d="M1 1h16l-6 8v7l-4 2.500V9z" fill="url(#paper)" stroke="#7b7b7b" strokeWidth="1.300" />
                        </Icon>
                      </th>
                      <th>Name</th>
                      <th>Expression</th>
                      <th>Value</th>
                      <th>Description</th>
                    </tr>
                  </thead>
                  <tbody>
                    <tr>
                      <td />
                      <td>&lt;new parameter&gt;</td>
                      <td />
                      <td />
                      <td />
                    </tr>
                  </tbody>
                </ParamTable>
              </PanelBox>
              <FootTabs>
                <FootTab $w={134} $on>Parameter List</FootTab>
                <FootTab $w={151}>Result Navigator</FootTab>
              </FootTabs>
            </Panel>

            <Panel $grow={585}>
              <PanelTitle>
                Messages
                <IconButton aria-label="Close messages"><CloseX s={11} /></IconButton>
              </PanelTitle>
              <MsgTools>
                <MsgTool $bg="#f6f6f6" $gap={0} aria-label="Errors">
                  <Icon w={18} h={18}>
                    <circle cx="9" cy="9" r="8" fill="#8e8e8e" stroke="#777" />
                    <path d="M5.500 5.500l7 7M12.500 5.500l-7 7" stroke="#fff" strokeWidth="2.600" />
                  </Icon>
                </MsgTool>
                <MsgTool $bg="#fbfbfb" $gap={8} aria-label="Warnings">
                  <Icon w={18} h={18}>
                    <path d="M9 2l7.500 14h-15z" fill="#c6c6c6" stroke="#9b9b9b" />
                    <path d="M9 7v5M9 13v2" stroke="#555" strokeWidth="1.800" />
                  </Icon>
                </MsgTool>
                <MsgTool $bg="#dedede" $gap={8} aria-label="Information"><InfoIcon /></MsgTool>
                <MsgTool $bg="none" $gap={16} aria-label="Clear messages">
                  <Icon w={18} h={16}>
                    <path d="M8 3h10M10 8h8M3 13.500h15" stroke="#222" strokeWidth="2.200" />
                    <path d="M1 1l8 9M9 1l-8 9" stroke="#c0392b" strokeWidth="2" />
                  </Icon>
                </MsgTool>
              </MsgTools>
              <MsgBox>
                <MsgList>
                  <MsgText>{messages}</MsgText>
                  <MsgLast><InfoIcon />Steady state energy criterion met, solver finished successfully.</MsgLast>
                </MsgList>
                <MsgScroll>
                  <MsgScrollKey $h={22} aria-label="Scroll up"><Triangle /></MsgScrollKey>
                  <Spacer />
                  <MsgScrollKey $h={30} aria-label="Scroll position" />
                  <MsgScrollKey $h={21} aria-label="Scroll down"><Triangle down /></MsgScrollKey>
                </MsgScroll>
              </MsgBox>
              <FootTabs>
                <FootTab $w={90} $on>Messages</FootTab>
                <FootTab $w={90}>Progress</FootTab>
              </FootTabs>
            </Panel>
          </Lower>
        </Content>
      </Workspace>

      <Status>
        <StatusTool $w={26} aria-label="Select">
          <Icon w={16} h={18}>
            <path d="M2 1l11 10H8l3 5-2.500 1.300L6 12l-4 3.500z" fill="#f6f6f6" stroke="#8a8a8a" />
          </Icon>
        </StatusTool>
        <StatusTool $w={27} $on aria-label="Zoom">
          <Icon w={22} h={21}>
            <path d="M1 12V1h12" stroke="#e07b22" strokeWidth="1.300" strokeDasharray="2 1" />
            <circle cx="10" cy="9.500" r="6" fill="#f6f6f6" stroke="#777" strokeWidth="1.600" />
            <path d="M7 9.500h6M10 6.500v6" stroke="#d9651a" strokeWidth="1.800" />
            <path d="M14.500 14l5 5" stroke="#333" strokeWidth="3.500" />
          </Icon>
        </StatusTool>
        <StatusTool $w={30} aria-label="Pan">
          <Icon w={20} h={20}>
            <path
              d="M10 0l4 4.500h-2.500v4h4V6L20 10l-4.500 4v-2.500h-4v4H14L10 20l-4-4.500h2.500v-4h-4V14L0 10l4.500-4v2.500h4v-4H6z"
              fill="#f0a13a"
              stroke="#c97b1c"
              strokeWidth=".7"
            />
          </Icon>
        </StatusTool>
        <StatusRule />
        <StatusTool $w={35} aria-label="Fit view">
          <Icon w={18} h={18}>
            <path d="M.5.5h17v17H.5z" fill="#fff" stroke="#999" />
            <path d="M2 2h5L2 7zM16 2v5l-5-5zM2 16v-5l5 5zM16 16h-5l5-5z" fill="#dd6f1e" />
            <path d="M4 4l3.500 3.500M14 4l-3.500 3.500M4 14l3.500-3.500M14 14l-3.500-3.500" stroke="#dd6f1e" strokeWidth="1.500" />
          </Icon>
        </StatusTool>
        <StatusRule />
        <StatusTool $w={34} aria-label="New plot">
          <Icon w={22} h={20}>
            <path d="M1 4h17v15H1z" fill="#f3f3f3" stroke="#555" strokeWidth="1.300" />
            <path d="M4 6v11M3 12h12" stroke="#111" strokeWidth="1.500" />
            <path d="M4 15l3-5 3 4 4-4" stroke="#c0392b" strokeWidth="1.400" />
            <Plus x={15.5} y={6} r={5.7} />
          </Icon>
        </StatusTool>
        <StatusCell>Raster=5.000</StatusCell>
        <StatusCell>Meshcells=64,032</StatusCell>
        <StatusCell>Normal</StatusCell>
        <StatusCell><span>mm</span><span>GHz</span><span>s</span><span>K</span></StatusCell>
        <Watermark>https://blog.csdn.net/qq_41542947</Watermark>
      </Status>
    </Page>
  );
}
